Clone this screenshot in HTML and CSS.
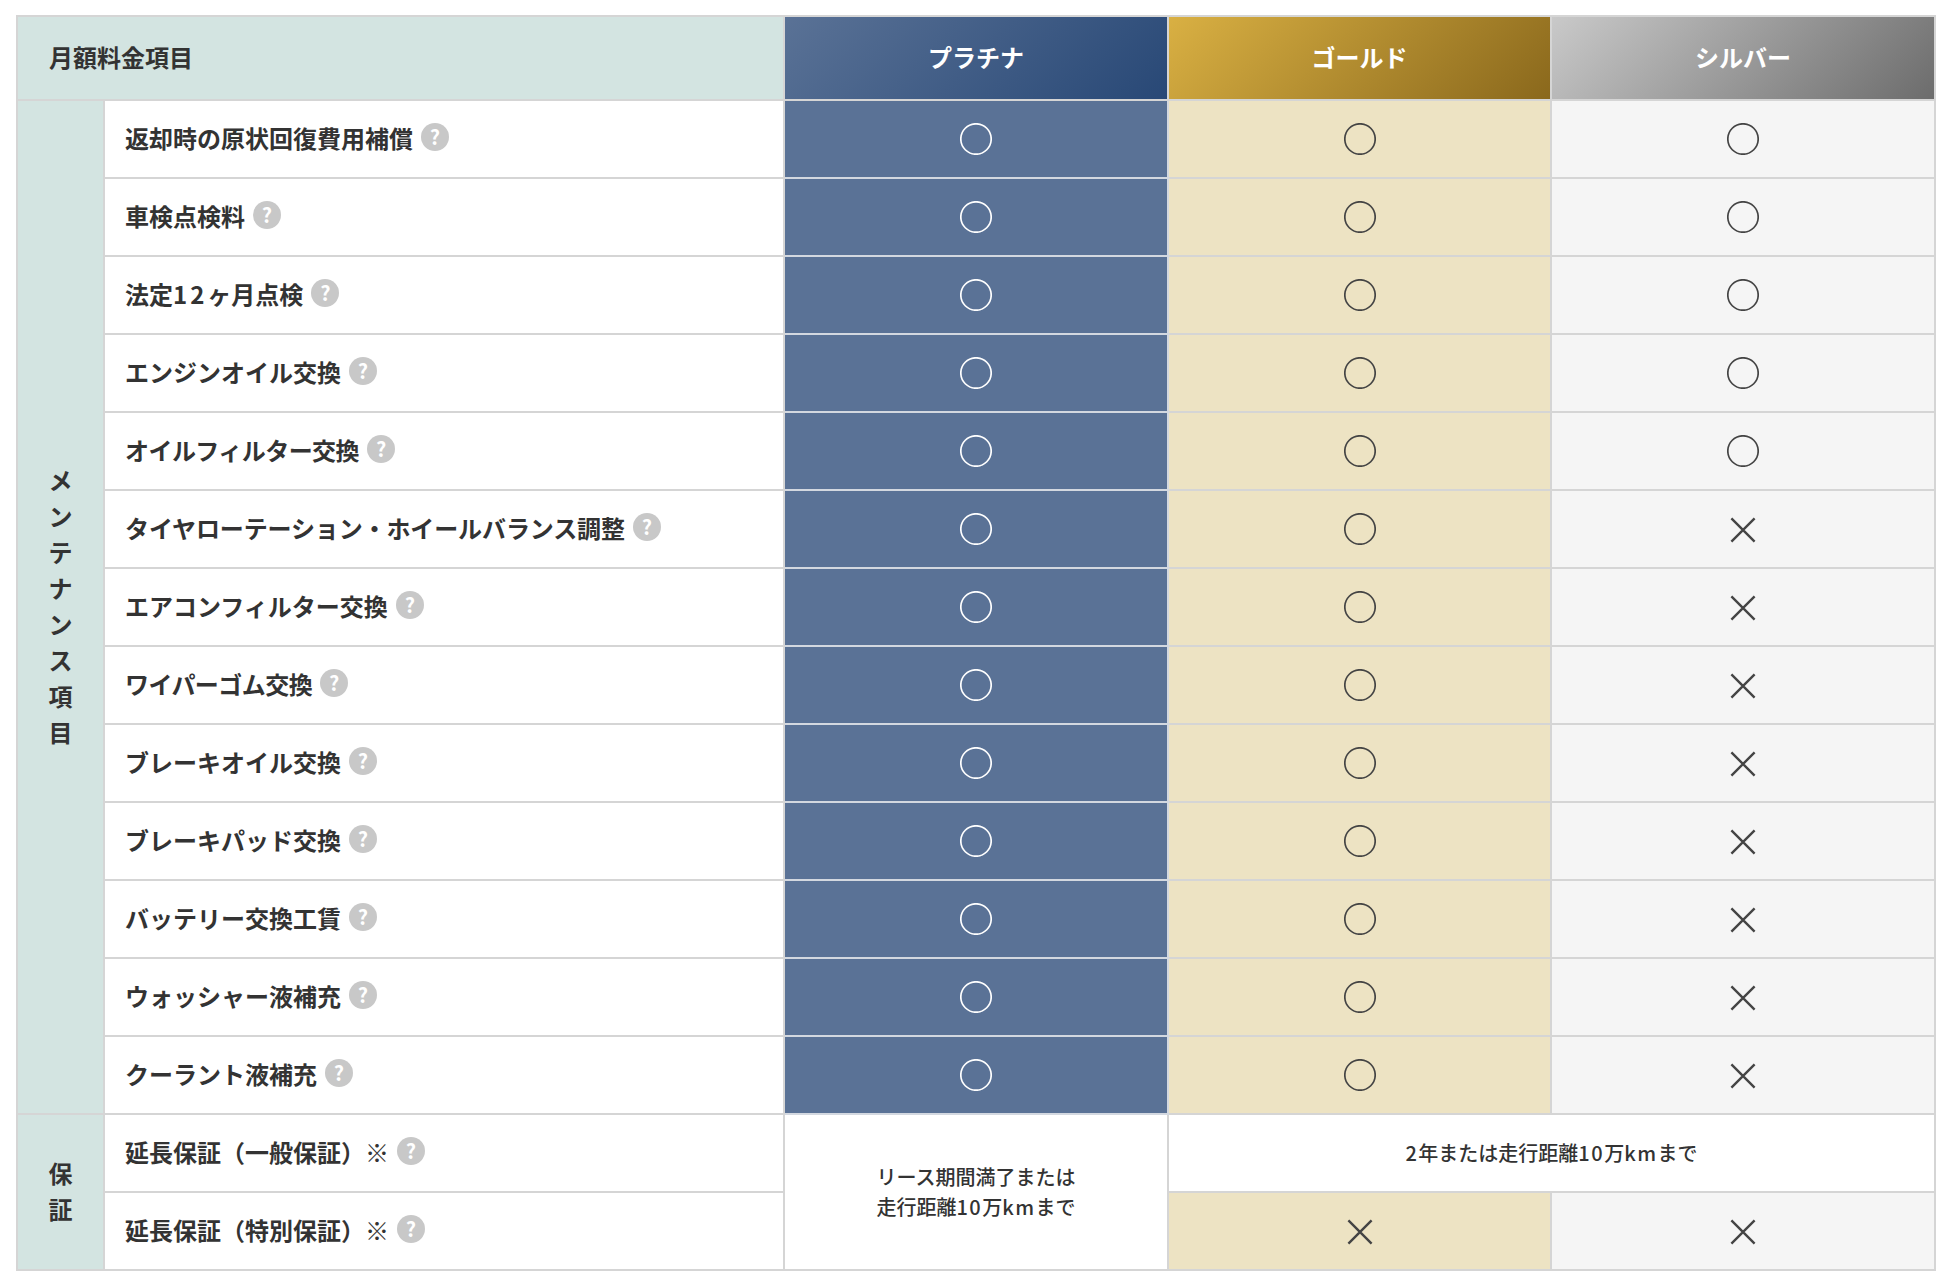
FILE: index.html
```html
<!DOCTYPE html>
<html lang="ja">
<head>
<meta charset="utf-8">
<title>月額料金項目</title>
<link rel="stylesheet" href="styles.css">
</head>
<body>
<table class="plans">
<colgroup><col class="c-group"><col class="c-name"><col class="c-plan"><col class="c-plan-mid"><col class="c-plan"></colgroup>
<thead>
<tr>
<th class="head-label" colspan="2"><span class="head-text">月額料金項目</span></th>
<th class="head-plan platinum"><span class="head-text">プラチナ</span></th>
<th class="head-plan gold"><span class="head-text">ゴールド</span></th>
<th class="head-plan silver"><span class="head-text">シルバー</span></th>
</tr>
</thead>
<tbody>
<tr>
<th class="group" rowspan="13"><span class="stack">メンテナンス項目</span></th>
<td class="name"><span class="label">返却時の原状回復費用補償<i class="help">?</i></span></td>
<td class="cell-p"><svg class="mark" viewBox="0 0 32 32"><circle cx="16" cy="16" r="15.2"/></svg></td>
<td class="cell-g"><svg class="mark" viewBox="0 0 32 32"><circle cx="16" cy="16" r="15.2"/></svg></td>
<td class="cell-s"><svg class="mark" viewBox="0 0 32 32"><circle cx="16" cy="16" r="15.2"/></svg></td>
</tr>
<tr>
<td class="name"><span class="label">車検点検料<i class="help">?</i></span></td>
<td class="cell-p"><svg class="mark" viewBox="0 0 32 32"><circle cx="16" cy="16" r="15.2"/></svg></td>
<td class="cell-g"><svg class="mark" viewBox="0 0 32 32"><circle cx="16" cy="16" r="15.2"/></svg></td>
<td class="cell-s"><svg class="mark" viewBox="0 0 32 32"><circle cx="16" cy="16" r="15.2"/></svg></td>
</tr>
<tr>
<td class="name"><span class="label"><span>法定<span class="num-l">12</span>ヶ月点検</span><i class="help">?</i></span></td>
<td class="cell-p"><svg class="mark" viewBox="0 0 32 32"><circle cx="16" cy="16" r="15.2"/></svg></td>
<td class="cell-g"><svg class="mark" viewBox="0 0 32 32"><circle cx="16" cy="16" r="15.2"/></svg></td>
<td class="cell-s"><svg class="mark" viewBox="0 0 32 32"><circle cx="16" cy="16" r="15.2"/></svg></td>
</tr>
<tr>
<td class="name"><span class="label">エンジンオイル交換<i class="help">?</i></span></td>
<td class="cell-p"><svg class="mark" viewBox="0 0 32 32"><circle cx="16" cy="16" r="15.2"/></svg></td>
<td class="cell-g"><svg class="mark" viewBox="0 0 32 32"><circle cx="16" cy="16" r="15.2"/></svg></td>
<td class="cell-s"><svg class="mark" viewBox="0 0 32 32"><circle cx="16" cy="16" r="15.2"/></svg></td>
</tr>
<tr>
<td class="name"><span class="label tight">オイルフィルター交換<i class="help">?</i></span></td>
<td class="cell-p"><svg class="mark" viewBox="0 0 32 32"><circle cx="16" cy="16" r="15.2"/></svg></td>
<td class="cell-g"><svg class="mark" viewBox="0 0 32 32"><circle cx="16" cy="16" r="15.2"/></svg></td>
<td class="cell-s"><svg class="mark" viewBox="0 0 32 32"><circle cx="16" cy="16" r="15.2"/></svg></td>
</tr>
<tr>
<td class="name"><span class="label snug">タイヤローテーション・ホイールバランス調整<i class="help">?</i></span></td>
<td class="cell-p"><svg class="mark" viewBox="0 0 32 32"><circle cx="16" cy="16" r="15.2"/></svg></td>
<td class="cell-g"><svg class="mark" viewBox="0 0 32 32"><circle cx="16" cy="16" r="15.2"/></svg></td>
<td class="cell-s"><svg class="mark" viewBox="0 0 32 32"><path d="M4.4 5.4 27.6 28.6M27.6 5.4 4.4 28.6"/></svg></td>
</tr>
<tr>
<td class="name"><span class="label">エアコンフィルター交換<i class="help">?</i></span></td>
<td class="cell-p"><svg class="mark" viewBox="0 0 32 32"><circle cx="16" cy="16" r="15.2"/></svg></td>
<td class="cell-g"><svg class="mark" viewBox="0 0 32 32"><circle cx="16" cy="16" r="15.2"/></svg></td>
<td class="cell-s"><svg class="mark" viewBox="0 0 32 32"><path d="M4.4 5.4 27.6 28.6M27.6 5.4 4.4 28.6"/></svg></td>
</tr>
<tr>
<td class="name"><span class="label tighter">ワイパーゴム交換<i class="help">?</i></span></td>
<td class="cell-p"><svg class="mark" viewBox="0 0 32 32"><circle cx="16" cy="16" r="15.2"/></svg></td>
<td class="cell-g"><svg class="mark" viewBox="0 0 32 32"><circle cx="16" cy="16" r="15.2"/></svg></td>
<td class="cell-s"><svg class="mark" viewBox="0 0 32 32"><path d="M4.4 5.4 27.6 28.6M27.6 5.4 4.4 28.6"/></svg></td>
</tr>
<tr>
<td class="name"><span class="label">ブレーキオイル交換<i class="help">?</i></span></td>
<td class="cell-p"><svg class="mark" viewBox="0 0 32 32"><circle cx="16" cy="16" r="15.2"/></svg></td>
<td class="cell-g"><svg class="mark" viewBox="0 0 32 32"><circle cx="16" cy="16" r="15.2"/></svg></td>
<td class="cell-s"><svg class="mark" viewBox="0 0 32 32"><path d="M4.4 5.4 27.6 28.6M27.6 5.4 4.4 28.6"/></svg></td>
</tr>
<tr>
<td class="name"><span class="label">ブレーキパッド交換<i class="help">?</i></span></td>
<td class="cell-p"><svg class="mark" viewBox="0 0 32 32"><circle cx="16" cy="16" r="15.2"/></svg></td>
<td class="cell-g"><svg class="mark" viewBox="0 0 32 32"><circle cx="16" cy="16" r="15.2"/></svg></td>
<td class="cell-s"><svg class="mark" viewBox="0 0 32 32"><path d="M4.4 5.4 27.6 28.6M27.6 5.4 4.4 28.6"/></svg></td>
</tr>
<tr>
<td class="name"><span class="label">バッテリー交換工賃<i class="help">?</i></span></td>
<td class="cell-p"><svg class="mark" viewBox="0 0 32 32"><circle cx="16" cy="16" r="15.2"/></svg></td>
<td class="cell-g"><svg class="mark" viewBox="0 0 32 32"><circle cx="16" cy="16" r="15.2"/></svg></td>
<td class="cell-s"><svg class="mark" viewBox="0 0 32 32"><path d="M4.4 5.4 27.6 28.6M27.6 5.4 4.4 28.6"/></svg></td>
</tr>
<tr>
<td class="name"><span class="label">ウォッシャー液補充<i class="help">?</i></span></td>
<td class="cell-p"><svg class="mark" viewBox="0 0 32 32"><circle cx="16" cy="16" r="15.2"/></svg></td>
<td class="cell-g"><svg class="mark" viewBox="0 0 32 32"><circle cx="16" cy="16" r="15.2"/></svg></td>
<td class="cell-s"><svg class="mark" viewBox="0 0 32 32"><path d="M4.4 5.4 27.6 28.6M27.6 5.4 4.4 28.6"/></svg></td>
</tr>
<tr>
<td class="name"><span class="label">クーラント液補充<i class="help">?</i></span></td>
<td class="cell-p"><svg class="mark" viewBox="0 0 32 32"><circle cx="16" cy="16" r="15.2"/></svg></td>
<td class="cell-g"><svg class="mark" viewBox="0 0 32 32"><circle cx="16" cy="16" r="15.2"/></svg></td>
<td class="cell-s"><svg class="mark" viewBox="0 0 32 32"><path d="M4.4 5.4 27.6 28.6M27.6 5.4 4.4 28.6"/></svg></td>
</tr>
<tr>
<th class="group" rowspan="2"><span class="stack">保証</span></th>
<td class="name"><span class="label">延長保証（一般保証）※<i class="help">?</i></span></td>
<td class="note" rowspan="2">リース期間満了または<br>走行距離<span class="num">10</span>万<span class="num">km</span>まで</td>
<td class="note" colspan="2"><span class="num">2</span>年または走行距離<span class="num">10</span>万<span class="num">km</span>まで</td>
</tr>
<tr>
<td class="name"><span class="label">延長保証（特別保証）※<i class="help">?</i></span></td>
<td class="cell-g"><svg class="mark" viewBox="0 0 32 32"><path d="M4.4 5.4 27.6 28.6M27.6 5.4 4.4 28.6"/></svg></td>
<td class="cell-s"><svg class="mark" viewBox="0 0 32 32"><path d="M4.4 5.4 27.6 28.6M27.6 5.4 4.4 28.6"/></svg></td>
</tr>
</tbody>
</table>
</body>
</html>
```
FILE: styles.css
```css
html, body {
  margin: 0;
  background: #fff;
}
body {
  padding: 15px 0 0 16px;
  font-family: "Noto Sans CJK JP", "Noto Sans", sans-serif;
  color: #333;
}
.plans {
  border-collapse: collapse;
  table-layout: fixed;
  width: 1918px;
  font-size: 24px;
  line-height: 36px;
}
.c-group { width: 87px; }
.c-name { width: 680px; }
.c-plan { width: 384px; }
.c-plan-mid { width: 383px; }
.plans tr { height: 78px; }
.plans thead tr { height: 84px; }
.plans th, .plans td {
  border: 2px solid #d5d5d5;
  padding: 0;
  font-weight: 600;
  text-align: center;
  vertical-align: middle;
}
.head-label, .group { background: #d3e4e1; }
.plans .head-label {
  text-align: left;
  padding-left: 31px;
}
.head-text {
  display: block;
  padding-bottom: 3px;
}
.head-plan { color: #fff; }
.platinum { background: linear-gradient(135deg, #5a7296 0%, #284876 100%); }
.gold { background: linear-gradient(135deg, #d9b043 0%, #8a681c 100%); }
.silver { background: linear-gradient(135deg, #c9c9c9 0%, #6c6c6c 100%); }
.stack {
  display: block;
  width: 1em;
  margin: 0 auto;
  padding-bottom: 3px;
  word-break: break-all;
}
.plans .name {
  text-align: left;
  padding-left: 20px;
}
.label {
  display: flex;
  align-items: center;
  gap: 8px;
  padding-bottom: 2px;
}
.snug { letter-spacing: -0.12px; }
.tight { letter-spacing: -0.55px; }
.tighter { letter-spacing: -0.55px; }
.num-l { letter-spacing: 3px; }
.num { letter-spacing: 1.5px; }
.help {
  display: flex;
  align-items: center;
  justify-content: center;
  width: 28px;
  height: 28px;
  margin-top: -2px;
  border-radius: 50%;
  background: #c8c8c8;
  color: #fff;
  font-size: 20px;
  font-style: normal;
  font-weight: 700;
  line-height: 1;
  letter-spacing: 0;
}
.cell-p { background: #5a7296; color: #fff; }
.cell-g { background: #ede3c3; color: #444; }
.cell-s { background: #f5f5f5; color: #444; }
.plans .cell-p { border-color: #d3d8e0; }
.mark {
  display: block;
  width: 32px;
  height: 32px;
  margin: 0 auto;
  fill: none;
  stroke: currentColor;
  stroke-width: 1.7;
}
.mark path { stroke-width: 2.4; }
.plans .note {
  font-size: 20px;
  font-weight: 500;
  line-height: 30px;
}
```
